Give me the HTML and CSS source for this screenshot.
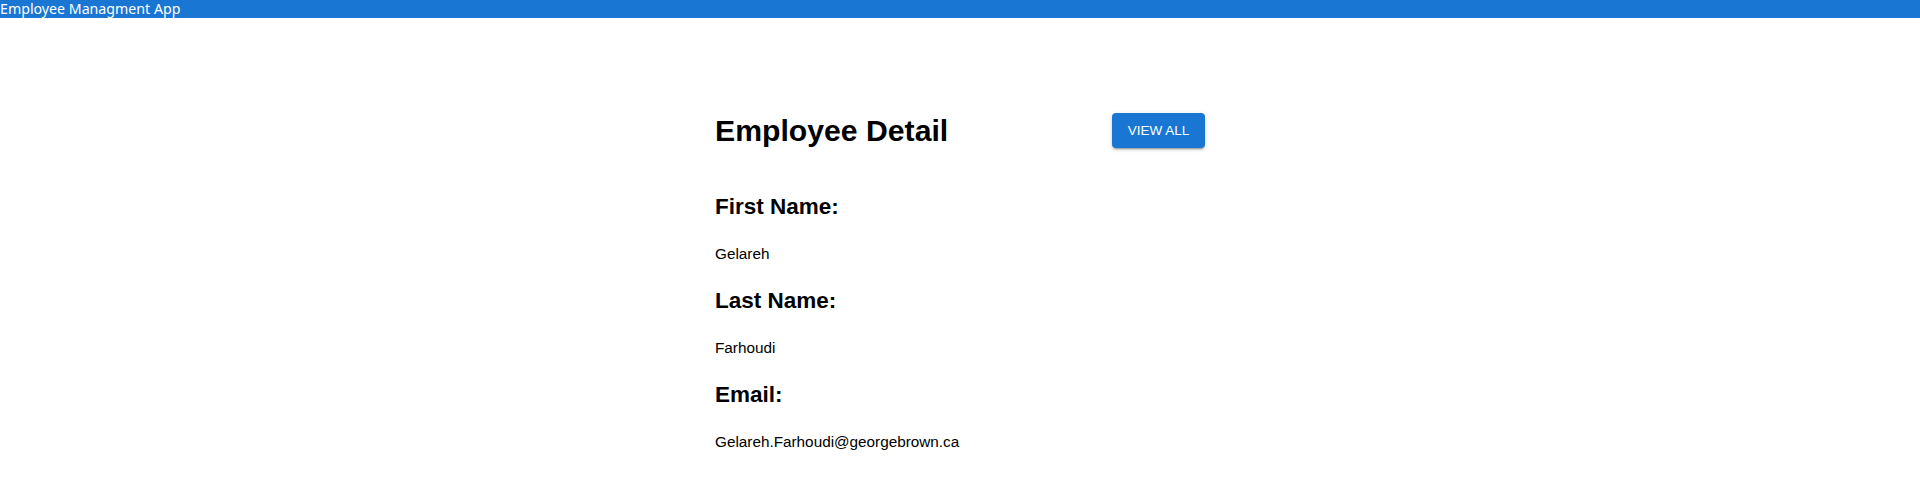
FILE: index.html
```html
<!DOCTYPE html>
<html lang="en">
<head>
<meta charset="utf-8">
<title>Employee Managment App</title>
<link rel="stylesheet" href="styles.css">
</head>
<body>
<header class="app-bar">Employee Managment App</header>
<main class="detail">
  <div class="detail-head">
    <h1 class="detail-title">Employee Detail</h1>
    <button class="btn-contained" type="button">View All</button>
  </div>
  <section class="field">
    <h2 class="field-label">First Name:</h2>
    <p class="field-value">Gelareh</p>
  </section>
  <section class="field">
    <h2 class="field-label">Last Name:</h2>
    <p class="field-value">Farhoudi</p>
  </section>
  <section class="field">
    <h2 class="field-label">Email:</h2>
    <p class="field-value">Gelareh.Farhoudi@georgebrown.ca</p>
  </section>
</main>
</body>
</html>
```
FILE: styles.css
```css
* { box-sizing: border-box; }
html, body { margin: 0; padding: 0; background: #fff; }
body { font-family: "Liberation Sans", Arial, sans-serif; color: #000; }

.app-bar {
  height: 18px;
  background: #1976d2;
  color: #fff;
  font-family: "Noto Sans", "Open Sans", sans-serif;
  font-size: 14.2px;
  line-height: 17px;
  white-space: nowrap;
}

.detail {
  width: 490px;
  margin: 95px auto 0;
  display: flex;
  flex-direction: column;
  gap: 26.5px;
}

.detail-head {
  display: flex;
  justify-content: space-between;
  align-items: center;
  margin-bottom: 19.5px;
}

.detail-title {
  margin: 0;
  font-size: 30.2px;
  line-height: 34px;
  font-weight: 700;
}

.btn-contained {
  width: 93px;
  height: 35px;
  border: 0;
  border-radius: 4px;
  background: #1976d2;
  color: #fff;
  font-family: "Liberation Sans", Arial, sans-serif;
  font-size: 13.5px;
  font-weight: 400;
  text-transform: uppercase;
  box-shadow: 0 3px 1px -2px rgba(0,0,0,.2), 0 2px 2px 0 rgba(0,0,0,.14), 0 1px 5px 0 rgba(0,0,0,.12);
  padding: 0;
  cursor: pointer;
}

.field {
  display: flex;
  flex-direction: column;
  gap: 24.5px;
}

.field-label {
  margin: 0;
  font-size: 22.5px;
  line-height: 26px;
  font-weight: 700;
}

.field-value {
  margin: 0;
  font-size: 15.3px;
  line-height: 17px;
}
```
